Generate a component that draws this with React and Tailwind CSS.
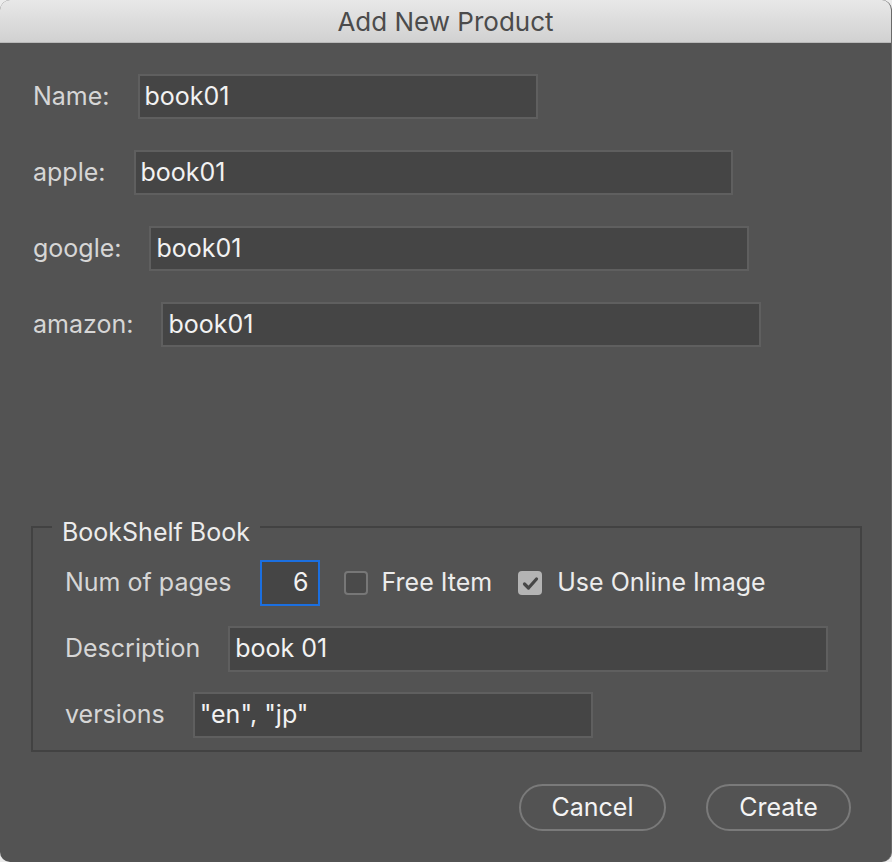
import React from 'react';

const font = { fontFamily: 'Inter, "Liberation Sans", sans-serif' };

function Field({ value, className = '' }) {
  return (
    <div
      className={`border-2 border-[#5f5f5f] bg-[#454545] pl-[5px] flex items-center text-[25px] text-[#f2f2f2] ${className}`}
    >
      {value}
    </div>
  );
}

function Row({ label, value, width, height = 'h-[45px]' }) {
  return (
    <div className="flex items-center gap-[28px]">
      <span className="text-[25px] text-[#d6d6d6]">{label}</span>
      <Field value={value} className={`${width} ${height}`} />
    </div>
  );
}

export default function App() {
  return (
    <div className="w-[892px] h-[862px] bg-[#ececec]" style={font}>
      <div className="w-full h-full flex flex-col rounded-[10px] overflow-hidden bg-[#535353] border-r border-[#6a6a6a]">
        {/* Title bar */}
        <div className="h-[43px] shrink-0 flex items-center justify-center bg-gradient-to-b from-[#e8e8e8] to-[#d1d1d1] border-b border-[#b9b9b9]">
          <span className="text-[26px] leading-[30px] pt-[2px] text-[#4b4b4b]">Add New Product</span>
        </div>

        {/* Body */}
        <div className="flex flex-col pl-[33px] pt-[31px] gap-[31px]">
          <Row label="Name:" value="book01" width="w-[400px]" />
          <Row label="apple:" value="book01" width="w-[599px]" />
          <Row label="google:" value="book01" width="w-[600px]" />
          <Row label="amazon:" value="book01" width="w-[600px]" />
        </div>

        {/* Group box */}
        <fieldset className="mt-[161px] ml-[31px] w-[831px] border-2 border-[#424242] pl-[32px] pr-[30px] pb-[12px] pt-[14px]">
          <legend className="ml-[-13px] px-[10px] pt-[10px] text-[25px] leading-[28px] text-[#ececec]">BookShelf Book</legend>
          <div className="flex flex-col gap-[20px]">
            <div className="flex items-center">
              <span className="text-[25px] text-[#d6d6d6]">Num of pages</span>
              <div className="ml-[28px] w-[60px] h-[46px] border-2 border-[#1b6fe0] bg-[#454545] flex items-center justify-end pr-[9px] text-[25px] text-[#f2f2f2]">
                6
              </div>
              <div className="ml-[24px] w-[24px] h-[24px] rounded-[4px] border-2 border-[#777] bg-[#4a4a4a]" />
              <span className="ml-[14px] text-[25px] text-[#ececec]">Free Item</span>
              <div className="ml-[26px] w-[24px] h-[24px] rounded-[4px] bg-[#b4b4b4] flex items-center justify-center">
                <svg width="17" height="15" viewBox="0 0 17 15">
                  <path d="M2.5 8 L6.5 12 L14.5 3" fill="none" stroke="#474747" strokeWidth="3.2" strokeLinecap="round" strokeLinejoin="round" />
                </svg>
              </div>
              <span className="ml-[15px] text-[25px] text-[#ececec]">Use Online Image</span>
            </div>
            <Row label="Description" value="book 01" width="w-[600px]" height="h-[46px]" />
            <Row label="versions" value={'"en", "jp"'} width="w-[400px]" height="h-[46px]" />
          </div>
        </fieldset>

        {/* Buttons */}
        <div className="flex justify-end gap-[40px] pr-[40px] mt-[32px]">
          <button className="w-[147px] h-[47px] rounded-full border-2 border-[#7a7a7a] text-[25px] text-[#f4f4f4]">
            Cancel
          </button>
          <button className="w-[145px] h-[47px] rounded-full border-2 border-[#7a7a7a] text-[25px] text-[#f4f4f4]">
            Create
          </button>
        </div>
      </div>
    </div>
  );
}
